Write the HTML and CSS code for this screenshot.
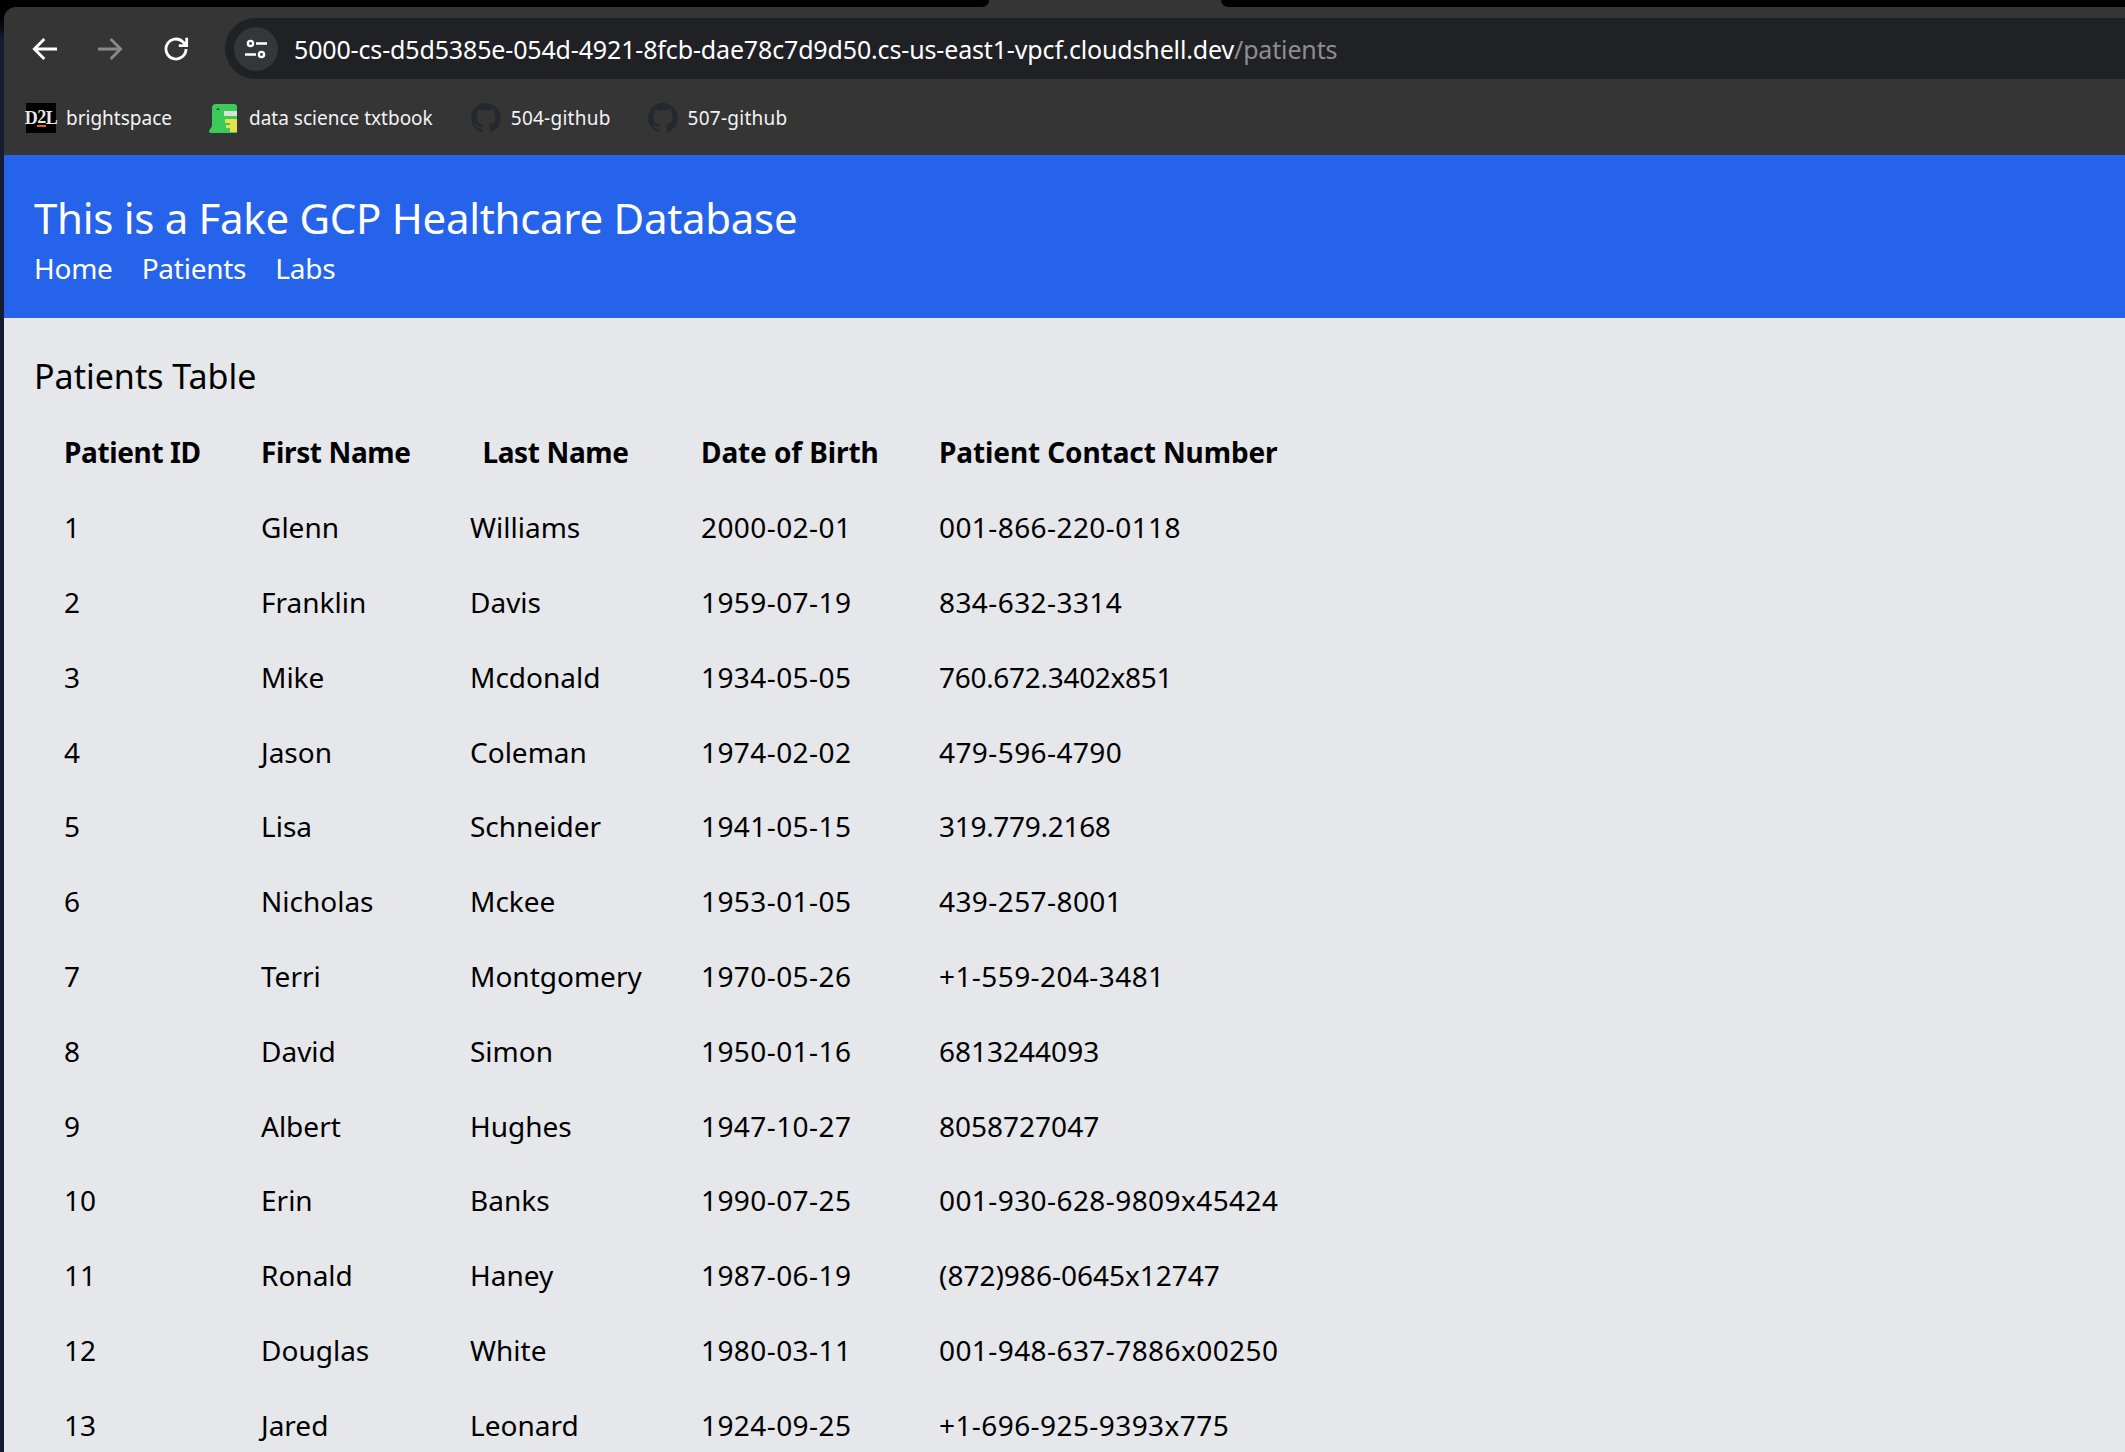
FILE: index.html
```html
<!DOCTYPE html>
<html lang="en">
<head>
<meta charset="utf-8">
<title>Patients</title>
<link rel="stylesheet" href="styles.css">
</head>
<body>
<div class="top-strip"><div class="strip-left"></div><div class="tab-gap"></div><div class="strip-right"></div></div>
<div class="browser">
  <div class="toolbar">
    <svg class="nav-icon back" viewBox="0 0 24 24"><path d="M21 12H4.5M11.5 4.5L4 12l7.5 7.5"/></svg>
    <svg class="nav-icon fwd" viewBox="0 0 24 24"><path d="M3 12h16.5M12.5 4.5L20 12l-7.5 7.5"/></svg>
    <svg class="nav-icon reload" viewBox="0 0 24 24"><path d="M19.5 12a7.5 7.5 0 1 1-2.2-5.3L20 9.2M20 3.6v5.9h-5.9"/></svg>
    <div class="omnibox">
      <span class="site-chip"><svg viewBox="0 0 24 24"><circle cx="6.5" cy="6.5" r="2.6"/><path d="M12 6.5h11M1 17.5h11"/><circle cx="17.5" cy="17.5" r="2.6"/></svg></span>
      <span class="url">5000-cs-d5d5385e-054d-4921-8fcb-dae78c7d9d50.cs-us-east1-vpcf.cloudshell.dev<span class="url-path">/patients</span></span>
    </div>
  </div>
  <div class="bookmarks">
    <a class="bm bm-d2l"><span class="d2l">D<b>2</b>L</span>brightspace</a>
    <a class="bm bm-book"><svg class="fav" viewBox="0 0 30 30"><path class="croc" d="M3 5q0-4 4-4h18q3 0 3 3v26H2q-2 0-2-2l3-5z"/><path class="eye" d="M7 7l2-2 2 2z"/><path class="jaw" d="M15 8h13v5H15z"/><path class="belly" d="M16 16h12v13H21v-4h-4v-3h4v-2h-5z"/></svg>data science txtbook</a>
    <a class="bm bm-gh"><svg class="fav" viewBox="0 0 16 16"><path class="gh" d="M8 0C3.58 0 0 3.58 0 8c0 3.54 2.29 6.53 5.47 7.59.4.07.55-.17.55-.38 0-.19-.01-.82-.01-1.49-2.01.37-2.53-.49-2.69-.94-.09-.23-.48-.94-.82-1.13-.28-.15-.68-.52-.01-.53.63-.01 1.08.58 1.23.82.72 1.21 1.87.87 2.33.66.07-.52.28-.87.51-1.07-1.78-.2-3.64-.89-3.64-3.95 0-.87.31-1.59.82-2.15-.08-.2-.36-1.02.08-2.12 0 0 .67-.21 2.2.82.64-.18 1.32-.27 2-.27s1.36.09 2 .27c1.53-1.04 2.2-.82 2.2-.82.44 1.1.16 1.92.08 2.12.51.56.82 1.27.82 2.15 0 3.07-1.87 3.75-3.65 3.95.29.25.54.73.54 1.48 0 1.07-.01 1.93-.01 2.2 0 .21.15.46.55.38A8.01 8.01 0 0 0 16 8c0-4.42-3.58-8-8-8z"/></svg>504-github</a>
    <a class="bm bm-gh"><svg class="fav" viewBox="0 0 16 16"><path class="gh" d="M8 0C3.58 0 0 3.58 0 8c0 3.54 2.29 6.53 5.47 7.59.4.07.55-.17.55-.38 0-.19-.01-.82-.01-1.49-2.01.37-2.53-.49-2.69-.94-.09-.23-.48-.94-.82-1.13-.28-.15-.68-.52-.01-.53.63-.01 1.08.58 1.23.82.72 1.21 1.87.87 2.33.66.07-.52.28-.87.51-1.07-1.78-.2-3.64-.89-3.64-3.95 0-.87.31-1.59.82-2.15-.08-.2-.36-1.02.08-2.12 0 0 .67-.21 2.2.82.64-.18 1.32-.27 2-.27s1.36.09 2 .27c1.53-1.04 2.2-.82 2.2-.82.44 1.1.16 1.92.08 2.12.51.56.82 1.27.82 2.15 0 3.07-1.87 3.75-3.65 3.95.29.25.54.73.54 1.48 0 1.07-.01 1.93-.01 2.2 0 .21.15.46.55.38A8.01 8.01 0 0 0 16 8c0-4.42-3.58-8-8-8z"/></svg>507-github</a>
  </div>
  <header class="site-header">
    <h1>This is a Fake GCP Healthcare Database</h1>
    <nav class="site-nav"><a>Home</a><a>Patients</a><a>Labs</a></nav>
  </header>
  <main class="content">
    <h2>Patients Table</h2>
    <table class="patients">
      <thead>
        <tr><th class="c1">Patient ID</th><th class="c2">First Name</th><th class="c3">Last Name</th><th class="c4">Date of Birth</th><th class="c5">Patient Contact Number</th></tr>
      </thead>
      <tbody>
        <tr><td>1</td><td>Glenn</td><td>Williams</td><td>2000-02-01</td><td class="ph">001-866-220-0118</td></tr>
        <tr><td>2</td><td>Franklin</td><td>Davis</td><td>1959-07-19</td><td class="ph">834-632-3314</td></tr>
        <tr><td>3</td><td>Mike</td><td>Mcdonald</td><td>1934-05-05</td><td class="dot">760.672.3402x851</td></tr>
        <tr><td>4</td><td>Jason</td><td>Coleman</td><td>1974-02-02</td><td class="ph">479-596-4790</td></tr>
        <tr><td>5</td><td>Lisa</td><td>Schneider</td><td>1941-05-15</td><td class="dot">319.779.2168</td></tr>
        <tr><td>6</td><td>Nicholas</td><td>Mckee</td><td>1953-01-05</td><td class="ph">439-257-8001</td></tr>
        <tr><td>7</td><td>Terri</td><td>Montgomery</td><td>1970-05-26</td><td class="ph">+1-559-204-3481</td></tr>
        <tr><td>8</td><td>David</td><td>Simon</td><td>1950-01-16</td><td>6813244093</td></tr>
        <tr><td>9</td><td>Albert</td><td>Hughes</td><td>1947-10-27</td><td>8058727047</td></tr>
        <tr><td>10</td><td>Erin</td><td>Banks</td><td>1990-07-25</td><td class="ph">001-930-628-9809x45424</td></tr>
        <tr><td>11</td><td>Ronald</td><td>Haney</td><td>1987-06-19</td><td>(872)986-0645x12747</td></tr>
        <tr><td>12</td><td>Douglas</td><td>White</td><td>1980-03-11</td><td class="ph">001-948-637-7886x00250</td></tr>
        <tr><td>13</td><td>Jared</td><td>Leonard</td><td>1924-09-25</td><td class="ph">+1-696-925-9393x775</td></tr>
      </tbody>
    </table>
  </main>
</div>
</body>
</html>
```
FILE: styles.css
```css
* { box-sizing: border-box; }
html, body { margin: 0; height: 1452px; overflow: hidden; }
body { font-family: "Noto Sans", "Open Sans", sans-serif; background: linear-gradient(#000 18px, #151b30 40px); }

.top-strip { height: 7px; display: flex; background: #353535; }
.strip-left { width: 989px; background: #000; border-bottom-right-radius: 7px; }
.tab-gap { width: 232px; }
.strip-right { flex: 1; background: #000; border-bottom-left-radius: 7px; }

.browser { margin-left: 4px; height: 1445px; background: #353535; border-top-left-radius: 12px; overflow: hidden; display: flex; flex-direction: column; }

.toolbar { height: 83px; flex: none; display: flex; align-items: center; }
.nav-icon { width: 32px; height: 32px; fill: none; stroke: #fff; stroke-width: 2.1; flex: none; }
.nav-icon.back { margin-left: 25px; }
.nav-icon.fwd { margin-left: 33px; stroke: #8a8a8a; }
.nav-icon.reload { margin-left: 34px; }
.omnibox { margin-left: 33px; flex: 1; height: 61px; background: #202124; border-radius: 31px 0 0 31px; display: flex; align-items: center; padding-left: 9px; }
.site-chip { width: 44px; height: 44px; border-radius: 50%; background: #35363a; display: flex; align-items: center; justify-content: center; flex: none; }
.site-chip svg { width: 24px; height: 24px; fill: none; stroke: #fff; stroke-width: 2.4; }
.url { margin-left: 16px; color: #fff; font-size: 25px; letter-spacing: -0.15px; white-space: nowrap; }
.url-path { color: #8e8e8e; }

.bookmarks { height: 65px; flex: none; display: flex; align-items: center; padding: 0 0 9px 22px; color: #f1f3f4; font-size: 19px; }
.bm { display: flex; align-items: center; gap: 10px; }
.bm-book, .bm-gh { margin-left: 37px; }
.bm-book + .bm-gh { margin-left: 38px; }
.bm-gh { letter-spacing: 0.25px; }
.d2l { width: 30px; height: 30px; background: #000; color: #e8e8e8; font-family: "Liberation Serif", serif; font-size: 18px; font-weight: 700; letter-spacing: -0.5px; display: flex; align-items: center; justify-content: center; flex: none; }
.d2l b { border-bottom: 2px solid #e8601c; line-height: 15px; }
.fav { width: 30px; height: 30px; flex: none; }
.croc { fill: #3ccb5b; }
.eye { fill: #14532d; }
.jaw { fill: #d8e4d8; }
.belly { fill: #e6e04a; }
.gh { fill: #24292f; }

.site-header { height: 163px; flex: none; background: #2563eb; color: #fff; padding: 34px 30px 0; }
.site-header h1 { margin: 0; font-size: 42px; font-weight: 400; line-height: 58px; letter-spacing: -0.3px; }
.site-nav { display: flex; gap: 29px; font-size: 28px; letter-spacing: -0.25px; line-height: 40px; margin-top: 1px; }

.content { flex: 1; background: #e5e7eb; color: #000; padding: 33px 30px 0; }
.content h2 { margin: 0 0 14px; font-size: 34px; font-weight: 400; line-height: 50px; }

.patients { border-collapse: collapse; table-layout: fixed; width: 1221px; font-size: 28px; }
.patients th, .patients td { padding: 15px 30px; height: 74.8px; line-height: 40px; text-align: left; white-space: nowrap; font-weight: 400; }
.patients th { font-weight: 700; letter-spacing: -0.1px; }
.patients .c1, .patients .c2, .patients .c3 { letter-spacing: -0.37px; }
.patients .c1 { width: 197px; }
.patients .c2 { width: 209px; }
.patients .c3 { width: 231px; text-align: center; }
.patients .c4 { width: 238px; }
.patients .c5 { width: 346px; }
.patients td:nth-child(4), .patients .ph { letter-spacing: 0.42px; }
.patients .dot { letter-spacing: -0.3px; }
```
